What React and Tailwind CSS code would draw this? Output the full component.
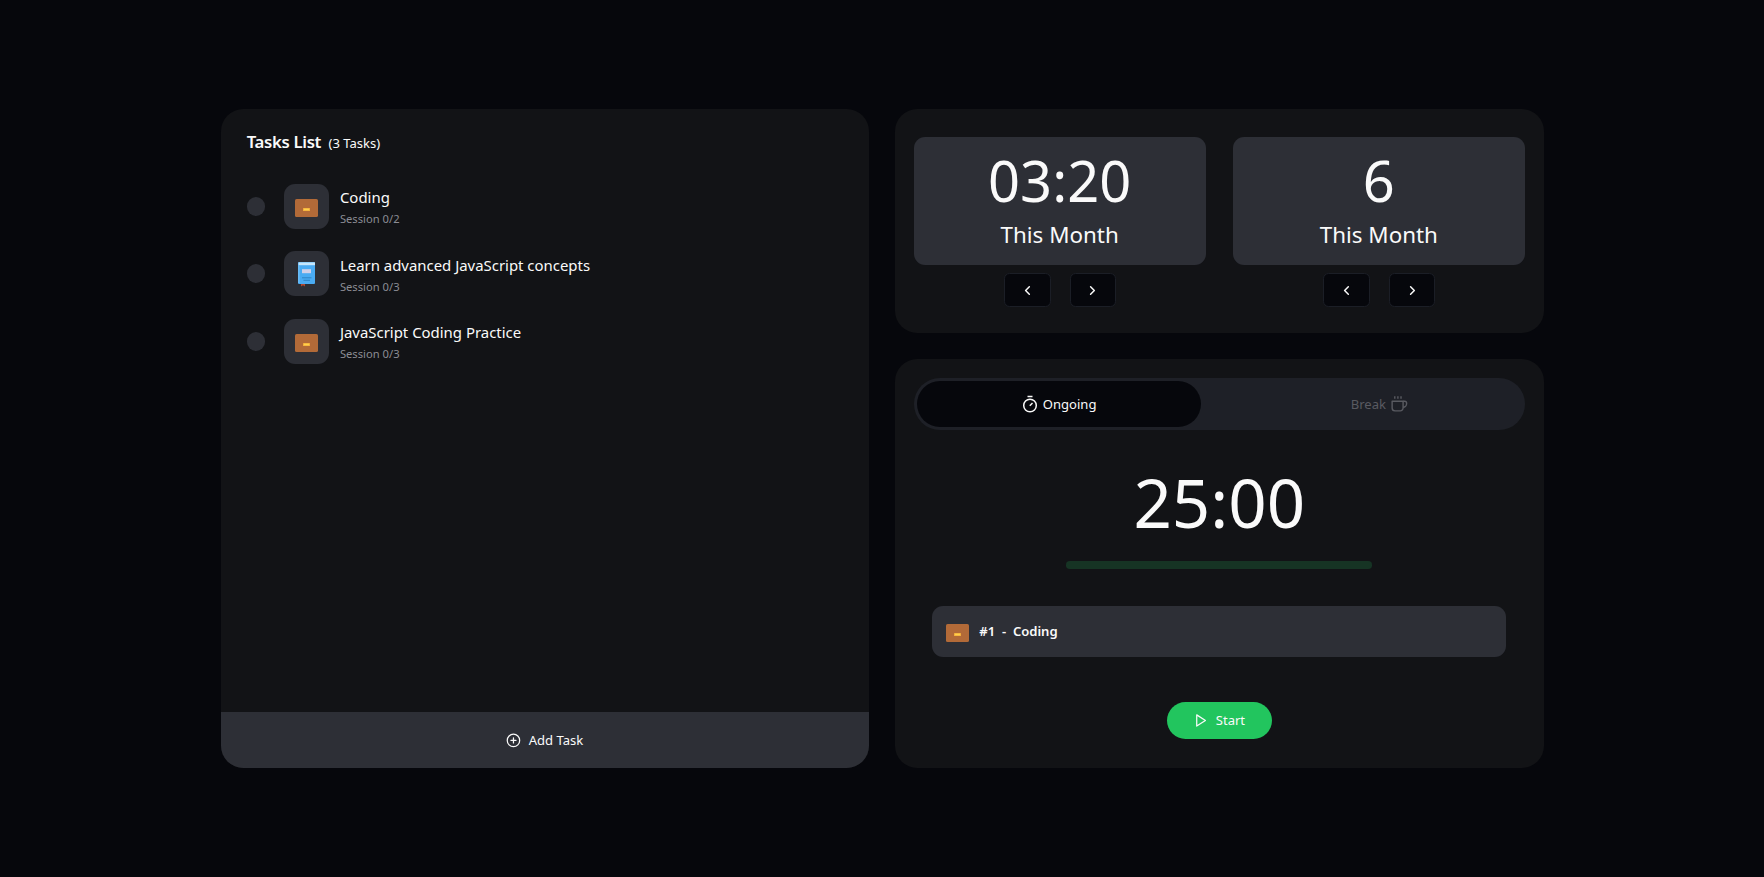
import React from "react";
import { ChevronLeft, ChevronRight, CirclePlus } from "lucide-react";

const tasks = [
  { title: "Coding", session: "Session 0/2", kind: "work" },
  { title: "Learn advanced JavaScript concepts", session: "Session 0/3", kind: "study" },
  { title: "JavaScript Coding Practice", session: "Session 0/3", kind: "work" },
];

function Briefcase() {
  return (
    <svg className="mt-[3px] h-[18px] w-[23px] shrink-0" viewBox="0 0 23 18">
      <rect width="23" height="18" rx="1.6" fill="#b26a38" />
      <rect x="8" y="9" width="7" height="3" rx="0.5" fill="#f4b03c" />
      <rect x="9" y="9.800" width="5" height="1.400" fill="#ffd04c" />
    </svg>
  );
}

function Notebook() {
  return (
    <svg className="mt-px h-[25px] w-[17px] shrink-0" viewBox="0 0 17 25">
      <path d="M3 20h4v4.6l-2-1.4-2 1.4z" fill="#b5472c" />
      <rect width="17" height="22" rx="1" fill="#4aabf2" />
      <rect x="0.500" y="0.4" width="16.500" height="2.800" fill="#c5e6fb" />
      <rect x="0" y="3" width="1.6" height="18" fill="#68bbf6" />
      <rect x="4" y="7.2" width="9" height="4" fill="#d2d0e8" />
      <path d="M4 15.800h9.500M5.500 18.300h6.500" stroke="#2f83c4" strokeWidth="1" />
    </svg>
  );
}

function StopwatchIcon() {
  return (
    <svg className="h-[18px] w-[16px]" viewBox="0 0 16 18" fill="none" stroke="currentColor">
      <circle cx="8" cy="10.500" r="6.300" strokeWidth="1.500" />
      <path d="M5.500 1.500h5" strokeWidth="1.500" />
      <path d="M7.800 10.700l2.700-2.700" strokeWidth="1.500" />
    </svg>
  );
}

function CupIcon() {
  return (
    <svg className="h-[18px] w-[17px]" viewBox="0 0 18 18" fill="none" stroke="currentColor" strokeWidth="1.500">
      <path d="M1.200 6h11.600v7.300a3 3 0 0 1-3 3H4.200a3 3 0 0 1-3-3z" strokeLinejoin="round" />
      <path d="M12.800 6h1.700a2 2 0 0 1 2 2v.8a3.700 3.700 0 0 1-3.700 3.700" />
      <path d="M4 .8v2.700M7.300.8v2.700M10.600.8v2.700" />
    </svg>
  );
}

function PlayIcon() {
  return (
    <svg className="size-4" viewBox="0 0 24 24" fill="none" stroke="currentColor" strokeWidth="2" strokeLinejoin="round">
      <polygon points="6 3 20 12 6 21" />
    </svg>
  );
}

function NavButton({ children }) {
  return (
    <button className="flex h-[33.500px] w-[46.500px] items-center justify-center rounded-md border border-[#1b1e26] bg-[#06070c]">
      {children}
    </button>
  );
}

function Stat({ value }) {
  return (
    <div className="flex w-[292px] flex-col items-center">
      <div className="flex h-[128px] w-full flex-col items-center rounded-xl bg-[#2d2f36] pt-4">
        <div className="text-6xl">{value}</div>
        <div className="mt-[12px] text-2xl">This Month</div>
      </div>
      <div className="mt-[8.500px] ml-px flex gap-[19px]">
        <NavButton><ChevronLeft className="size-4" strokeWidth={2.4} /></NavButton>
        <NavButton><ChevronRight className="size-4" strokeWidth={2.4} /></NavButton>
      </div>
    </div>
  );
}

export default function App() {
  return (
    <div className="flex h-screen items-center justify-center bg-[#06070c] font-['Noto_Sans',sans-serif] text-[#fafafa]">
      <style>{"html{font-size:14.9333px}"}</style>
      <main className="grid h-[659.500px] w-[1323px] grid-cols-2 gap-[26px]">
        <section className="flex flex-col overflow-hidden rounded-3xl bg-[#121316]">
          <header className="flex items-baseline gap-2 px-7 pt-[20px]">
            <h1 className="text-lg font-semibold tracking-[-0.02em]">Tasks List</h1>
            <span className="text-sm">(3 Tasks)</span>
          </header>
          <ul className="mt-[29px] flex flex-1 flex-col gap-[22.700px] px-7">
            {tasks.map((t) => (
              <li key={t.title} className="flex h-12 items-center">
                <span className="size-5 rounded-full bg-[#2d2f36]" />
                <span className="ml-5 flex size-12 items-center justify-center rounded-xl bg-[#2d2f36]">
                  {t.kind === "work" ? <Briefcase /> : <Notebook />}
                </span>
                <span className="ml-3 flex flex-col gap-1 pt-[1px]">
                  <span className="text-base">{t.title}</span>
                  <span className="text-xs text-[#8b8c94]">{t.session}</span>
                </span>
              </li>
            ))}
          </ul>
          <button className="flex h-[56px] items-center justify-center gap-2 bg-[#2d2f36] text-sm">
            <CirclePlus className="size-4" />
            Add Task
          </button>
        </section>

        <div className="flex flex-col gap-[26px]">
          <section className="flex h-[224px] justify-between rounded-3xl bg-[#121316] px-5 pt-[28px]">
            <Stat value="03:20" />
            <Stat value="6" />
          </section>

          <section className="flex flex-1 flex-col items-center rounded-3xl bg-[#121316] px-5 pt-[19px]">
            <div className="flex h-[52.500px] w-full justify-between rounded-full bg-[#1e2027] p-1">
              <div className="flex h-full w-[283.500px] items-center justify-center gap-[5px] rounded-full bg-[#06070c] text-sm">
                <StopwatchIcon />
                Ongoing
              </div>
              <div className="flex h-full w-[283.500px] items-center justify-center gap-[5px] text-sm text-[#595a61]">
                Break
                <CupIcon />
              </div>
            </div>
            <div className="mt-[39px] text-7xl">25:00</div>
            <div className="mt-[25px] h-2 w-1/2 rounded bg-[#163424]" />
            <div className="mt-[37.500px] flex h-[50.500px] w-[574px] items-center rounded-xl bg-[#2d2f36] px-[14px] text-sm font-semibold">
              <Briefcase />
              <span className="ml-[10px] whitespace-pre">#1  -  Coding</span>
            </div>
            <button className="mt-[45px] flex h-10 w-[105px] items-center justify-center gap-2 rounded-full bg-[#22c55e] text-sm">
              <PlayIcon />
              Start
            </button>
          </section>
        </div>
      </main>
    </div>
  );
}
